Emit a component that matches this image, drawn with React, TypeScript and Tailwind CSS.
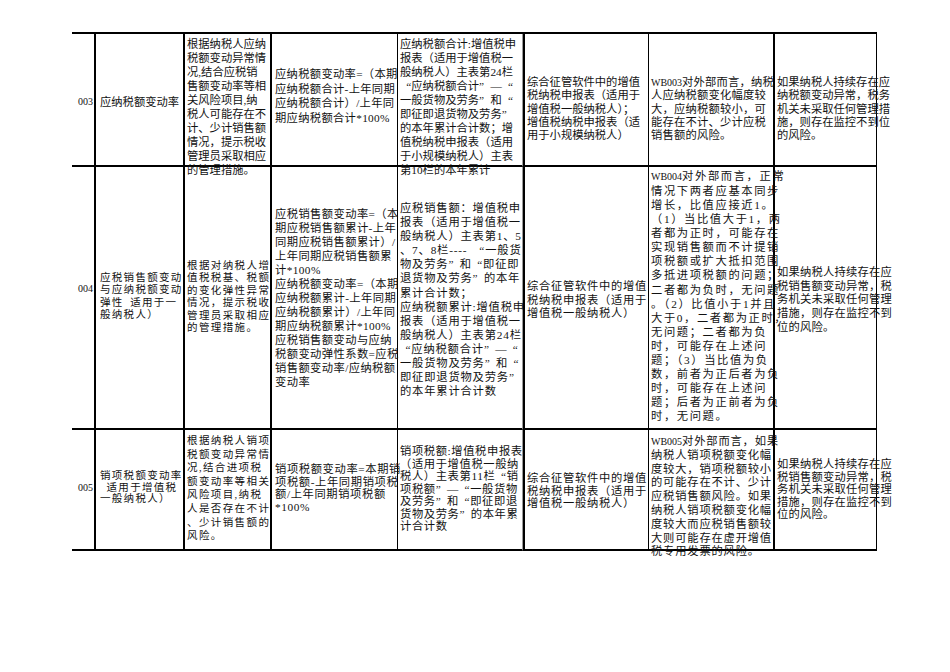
import React from "react";

type C = { lines: string[]; cls: string; box: string };

const FONT = "font-['Liberation_Serif','Noto_Sans_CJK_SC',serif]";

const colBox = [
  "border-r-2 border-b-2 border-black text-right pr-[1px]",
  "border-r-2 border-b-2 border-black pl-[4px]",
  "border-r-2 border-b-2 border-black pl-[2px]",
  "border-r border-b-2 border-black pl-[3px]",
  "border-r border-b-2 border-r-[#9a9a9a] border-b-black pl-[2px]",
  "border-l-2 border-r border-b-2 border-black pl-[2px]",
  "border-r-2 border-b-2 border-black pl-[2px]",
  "border-r border-b-2 border-black pl-[2px]",
];

const rows: C[][] = [
  [
    { lines: ["003"], cls: "pt-[61px] leading-[14px] text-[10px]", box: colBox[0] },
    { lines: ["应纳税额变动率"], cls: "pt-[61px] leading-[14px]", box: colBox[1] },
    {
      lines: ["根据纳税人应纳", "税额变动异常情", "况,结合应税销", "售额变动率等相", "关风险项目,纳", "税人可能存在不", "计、少计销售额", "情况，提示税收", "管理员采取相应", "的管理措施。"],
      cls: "pt-[3px] leading-[14px]",
      box: colBox[2],
    },
    {
      lines: ["应纳税额变动率=（本期", "应纳税额合计-上年同期", "应纳税额合计）/上年同", "期应纳税额合计*100%"],
      cls: "pt-[33px] leading-[14.5px] tracking-[0.3px]",
      box: colBox[3],
    },
    {
      lines: ["应纳税额合计:增值税申", "报表（适用于增值税一", "般纳税人）主表第24栏", "“应纳税额合计”—“", "一般货物及劳务”和“", "即征即退货物及劳务”", "的本年累计合计数；增", "值税纳税申报表（适用", "于小规模纳税人）主表", "第10栏的本年累计"],
      cls: "pt-[3px] leading-[14px]",
      box: colBox[4],
    },
    {
      lines: ["综合征管软件中的增值", "税纳税申报表（适用于", "增值税一般纳税人）；", "增值税纳税申报表（适", "用于小规模纳税人）"],
      cls: "pt-[42px] leading-[13.3px]",
      box: colBox[5],
    },
    {
      lines: ["WB003对外部而言，纳税", "人应纳税额变化幅度较", "大，应纳税额较小，可", "能存在不计、少计应税", "销售额的风险。"],
      cls: "pt-[42px] leading-[13.3px] tracking-[0.2px]",
      box: colBox[6],
    },
    {
      lines: ["如果纳税人持续存在应", "纳税额变动异常，税务", "机关未采取任何管理措", "施，则存在监控不到位", "的风险。"],
      cls: "pt-[42px] leading-[13.3px]",
      box: colBox[7],
    },
  ],
  [
    { lines: ["004"], cls: "pt-[115px] leading-[14px] text-[10px]", box: colBox[0] },
    {
      lines: ["应税销售额变动", "与应纳税额变动", "弹性\u2002适用于一", "般纳税人）"],
      cls: "pt-[105px] leading-[12.4px] text-[10.5px] tracking-[1.3px]",
      box: colBox[1],
    },
    {
      lines: ["根据对纳税人增", "值税税基、税额", "的变化弹性异常", "情况，提示税收", "管理员采取相应", "的管理措施。"],
      cls: "pt-[93px] leading-[12.4px] text-[10.5px] tracking-[1.4px]",
      box: colBox[2],
    },
    {
      lines: ["应税销售额变动率=（本", "期应税销售额累计-上年", "同期应税销售额累计）/", "上年同期应税销售额累", "计*100%", "应纳税额变动率=（本期", "应纳税额累计-上年同期", "应纳税额累计）/上年同", "期应纳税额累计*100%", "应税销售额变动与应纳", "税额变动弹性系数=应税", "销售额变动率/应纳税额", "变动率"],
      cls: "pt-[40px] leading-[14px] tracking-[0.4px]",
      box: colBox[3],
    },
    {
      lines: ["应税销售额：增值税申", "报表（适用于增值税一", "般纳税人）主表第1、5", "、7、8栏----\u2002“一般货", "物及劳务”和“即征即", "退货物及劳务”的本年", "累计合计数；", "应纳税额累计:增值税申", "报表（适用于增值税一", "般纳税人）主表第24栏", "“应纳税额合计”—“", "一般货物及劳务”和“", "即征即退货物及劳务”", "的本年累计合计数"],
      cls: "pt-[34px] leading-[14.1px] tracking-[0.8px]",
      box: colBox[4],
    },
    {
      lines: ["综合征管软件中的增值", "税纳税申报表（适用于", "增值税一般纳税人）"],
      cls: "pt-[113px] leading-[13.7px] tracking-[0.7px]",
      box: colBox[5],
    },
    {
      lines: ["WB004对外部而言，正常", "情况下两者应基本同步", "增长，比值应接近1。", "（1）当比值大于1，两", "者都为正时，可能存在", "实现销售额而不计提销", "项税额或扩大抵扣范围", "多抵进项税额的问题；", "二者都为负时，无问题", "。（2）比值小于1并且", "大于0，二者都为正时，", "无问题；二者都为负", "时，可能存在上述问", "题；（3）当比值为负", "数，前者为正后者为负", "时，可能存在上述问", "题；后者为正前者为负", "时，无问题。"],
      cls: "pt-[2px] leading-[14.06px] tracking-[1.6px]",
      box: colBox[6],
    },
    {
      lines: ["如果纳税人持续存在应", "税销售额变动异常，税", "务机关未采取任何管理", "措施，则存在监控不到", "位的风险。"],
      cls: "pt-[99px] leading-[13.7px] tracking-[0.2px]",
      box: colBox[7],
    },
  ],
  [
    { lines: ["005"], cls: "pt-[51px] leading-[14px] text-[10px]", box: colBox[0] },
    {
      lines: ["销项税额变动率", "\u2002适用于增值税", "一般纳税人）"],
      cls: "pt-[40px] leading-[11.7px] text-[10.5px] tracking-[1.3px]",
      box: colBox[1],
    },
    {
      lines: ["根据纳税人销项", "税额变动异常情", "况,结合进项税", "额变动率等相关", "风险项目,纳税", "人是否存在不计", "、少计销售额的", "风险。"],
      cls: "pt-[4px] leading-[13.6px] text-[10.5px] tracking-[1.4px]",
      box: colBox[2],
    },
    {
      lines: ["销项税额变动率=本期销", "项税额-上年同期销项税", "额/上年同期销项税额", "*100%"],
      cls: "pt-[33px] leading-[12.5px] tracking-[0.6px]",
      box: colBox[3],
    },
    {
      lines: ["销项税额:增值税申报表", "（适用于增值税一般纳", "税人）主表第11栏“销", "项税额”—“一般货物", "及劳务”和“即征即退", "货物及劳务”的本年累", "计合计数"],
      cls: "pt-[15px] leading-[12.5px] tracking-[0.6px]",
      box: colBox[4],
    },
    {
      lines: ["综合征管软件中的增值", "税纳税申报表（适用于", "增值税一般纳税人）"],
      cls: "pt-[42px] leading-[12.5px] tracking-[0.7px]",
      box: colBox[5],
    },
    {
      lines: ["WB005对外部而言，如果", "纳税人销项税额变化幅", "度较大，销项税额较小", "的可能存在不计、少计", "应税销售额风险。如果", "纳税人销项税额变化幅", "度较大而应税销售额较", "大则可能存在虚开增值", "税专用发票的风险。"],
      cls: "pt-[5px] leading-[13.8px] tracking-[0.8px]",
      box: colBox[6],
    },
    {
      lines: ["如果纳税人持续存在应", "税销售额变动异常，税", "务机关未采取任何管理", "措施，则存在监控不到", "位的风险。"],
      cls: "pt-[28px] leading-[12.5px] tracking-[0.2px]",
      box: colBox[7],
    },
  ],
];

function Line({ text }: { text: string }) {
  const parts: React.ReactNode[] = [];
  let buf = "";
  let k = 0;
  const flush = () => {
    if (buf) {
      parts.push(<React.Fragment key={k++}>{buf}</React.Fragment>);
      buf = "";
    }
  };
  let rest = text;
  if (rest.startsWith("WB00")) {
    parts.push(
      <span key={k++} className="text-[10px] tracking-[0px]">
        {rest.slice(0, 5)}
      </span>
    );
    rest = rest.slice(5);
  }
  for (const ch of rest) {
    if (ch === "“" || ch === "”") {
      flush();
      parts.push(
        <span key={k++} className={`inline-block w-[1em] ${ch === "“" ? "text-right" : "text-left"}`}>
          {ch}
        </span>
      );
    } else {
      buf += ch;
    }
  }
  flush();
  return <div>{parts}</div>;
}

export default function App() {
  return (
    <div
      className={`w-[950px] h-[672px] bg-white pt-[32px] pl-[72px] text-[11.3px] text-[#111] ${FONT}`}
      lang="zh-CN"
    >
      <div className="grid w-[805px] grid-cols-[24px_89px_87px_126px_125px_126px_126px_102px] grid-rows-[133px_263px_121px] border-t-2 border-black">
        {rows.map((row, ri) =>
          row.map((c, ci) => (
            <div key={`${ri}-${ci}`} className={`overflow-visible ${c.box}`}>
              <div className={`whitespace-nowrap ${c.cls}`}>
                {c.lines.map((l, li) => (
                  <Line key={li} text={l} />
                ))}
              </div>
            </div>
          ))
        )}
      </div>
    </div>
  );
}
